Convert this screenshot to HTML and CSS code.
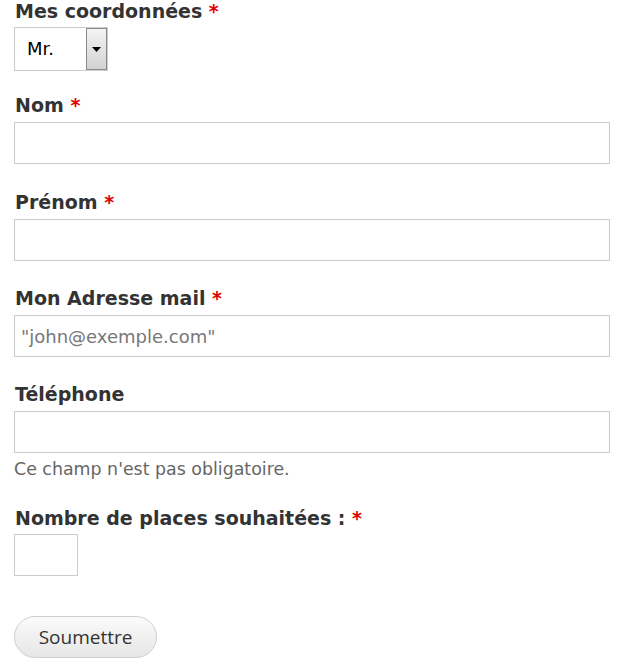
FILE: index.html
```html
<!DOCTYPE html>
<html lang="fr">
<head>
<meta charset="utf-8">
<title>Formulaire</title>
<link rel="stylesheet" href="styles.css">
</head>
<body>
<form class="form">
  <div class="group group-select">
    <label class="label">Mes coordonnées <span class="req">*</span></label>
    <div class="select-box">
      <span class="select-value">Mr.</span>
      <span class="select-arrow"><svg width="9" height="5" viewBox="0 0 9 5"><path d="M0 0h9L4.5 5z" fill="#000"/></svg></span>
    </div>
  </div>
  <div class="group group-first">
    <label class="label">Nom <span class="req">*</span></label>
    <input class="input" type="text">
  </div>
  <div class="group">
    <label class="label">Prénom <span class="req">*</span></label>
    <input class="input" type="text">
  </div>
  <div class="group">
    <label class="label">Mon Adresse mail <span class="req">*</span></label>
    <input class="input" type="text" placeholder="&quot;john@exemple.com&quot;">
  </div>
  <div class="group group-desc">
    <label class="label">Téléphone</label>
    <input class="input" type="text">
    <div class="desc">Ce champ n'est pas obligatoire.</div>
  </div>
  <div class="group group-small">
    <label class="label">Nombre de places souhaitées : <span class="req">*</span></label>
    <input class="input input-small" type="text">
  </div>
  <button class="btn" type="button">Soumettre</button>
</form>
</body>
</html>
```
FILE: styles.css
```css
html, body {
  margin: 0;
  padding: 0;
  background: #fff;
}
body {
  font-family: "DejaVu Sans", Verdana, sans-serif;
  color: #333;
}
.form {
  padding: 0 20px 0 14px;
  display: flex;
  flex-direction: column;
  align-items: flex-start;
}
.group {
  display: flex;
  flex-direction: column;
  align-items: flex-start;
  width: 100%;
  margin-bottom: 26px;
}
.group-select {
  margin-bottom: 23px;
}
.group-first {
  margin-bottom: 27px;
}
.label {
  font-size: 19px;
  line-height: 22px;
  font-weight: bold;
  color: #333;
  margin: 0 0 6px 1px;
}
.group-select .label {
  margin-bottom: 5px;
}
.group-small .label {
  margin-bottom: 5px;
}
.req {
  color: #e00000;
}
.select-box {
  display: flex;
  align-items: stretch;
  width: 94px;
  height: 44px;
  box-sizing: border-box;
  border: 1px solid #ccc;
  background: #fff;
}
.select-value {
  flex: 1;
  font-size: 18px;
  line-height: 42px;
  color: #000;
  padding-left: 12px;
}
.select-arrow {
  width: 21px;
  box-sizing: border-box;
  border: 1px solid #8a8a8a;
  background: linear-gradient(#f4f4f4, #d2d2d2);
  display: flex;
  align-items: center;
  justify-content: center;
}
.input {
  width: 100%;
  height: 42px;
  box-sizing: border-box;
  border: 1px solid #ccc;
  border-radius: 0;
  padding: 0 6px;
  font-family: "DejaVu Sans", Verdana, sans-serif;
  font-size: 18px;
  color: #333;
  background: #fff;
  margin: 0;
}
.input::placeholder {
  color: #777;
}
.input-small {
  width: 64px;
}
.group-desc {
  margin-bottom: 28px;
}
.desc {
  font-size: 17.4px;
  line-height: 20px;
  color: #666;
  margin-top: 6px;
}
.group-small {
  margin-bottom: 40px;
}
.btn {
  width: 143px;
  height: 42px;
  border: 1px solid #d0d0d0;
  border-radius: 21px;
  background: linear-gradient(#fbfbfb, #e6e6e6);
  font-family: "Open Sans", sans-serif;
  font-size: 19px;
  color: #333;
  padding: 0;
  cursor: pointer;
}
```
